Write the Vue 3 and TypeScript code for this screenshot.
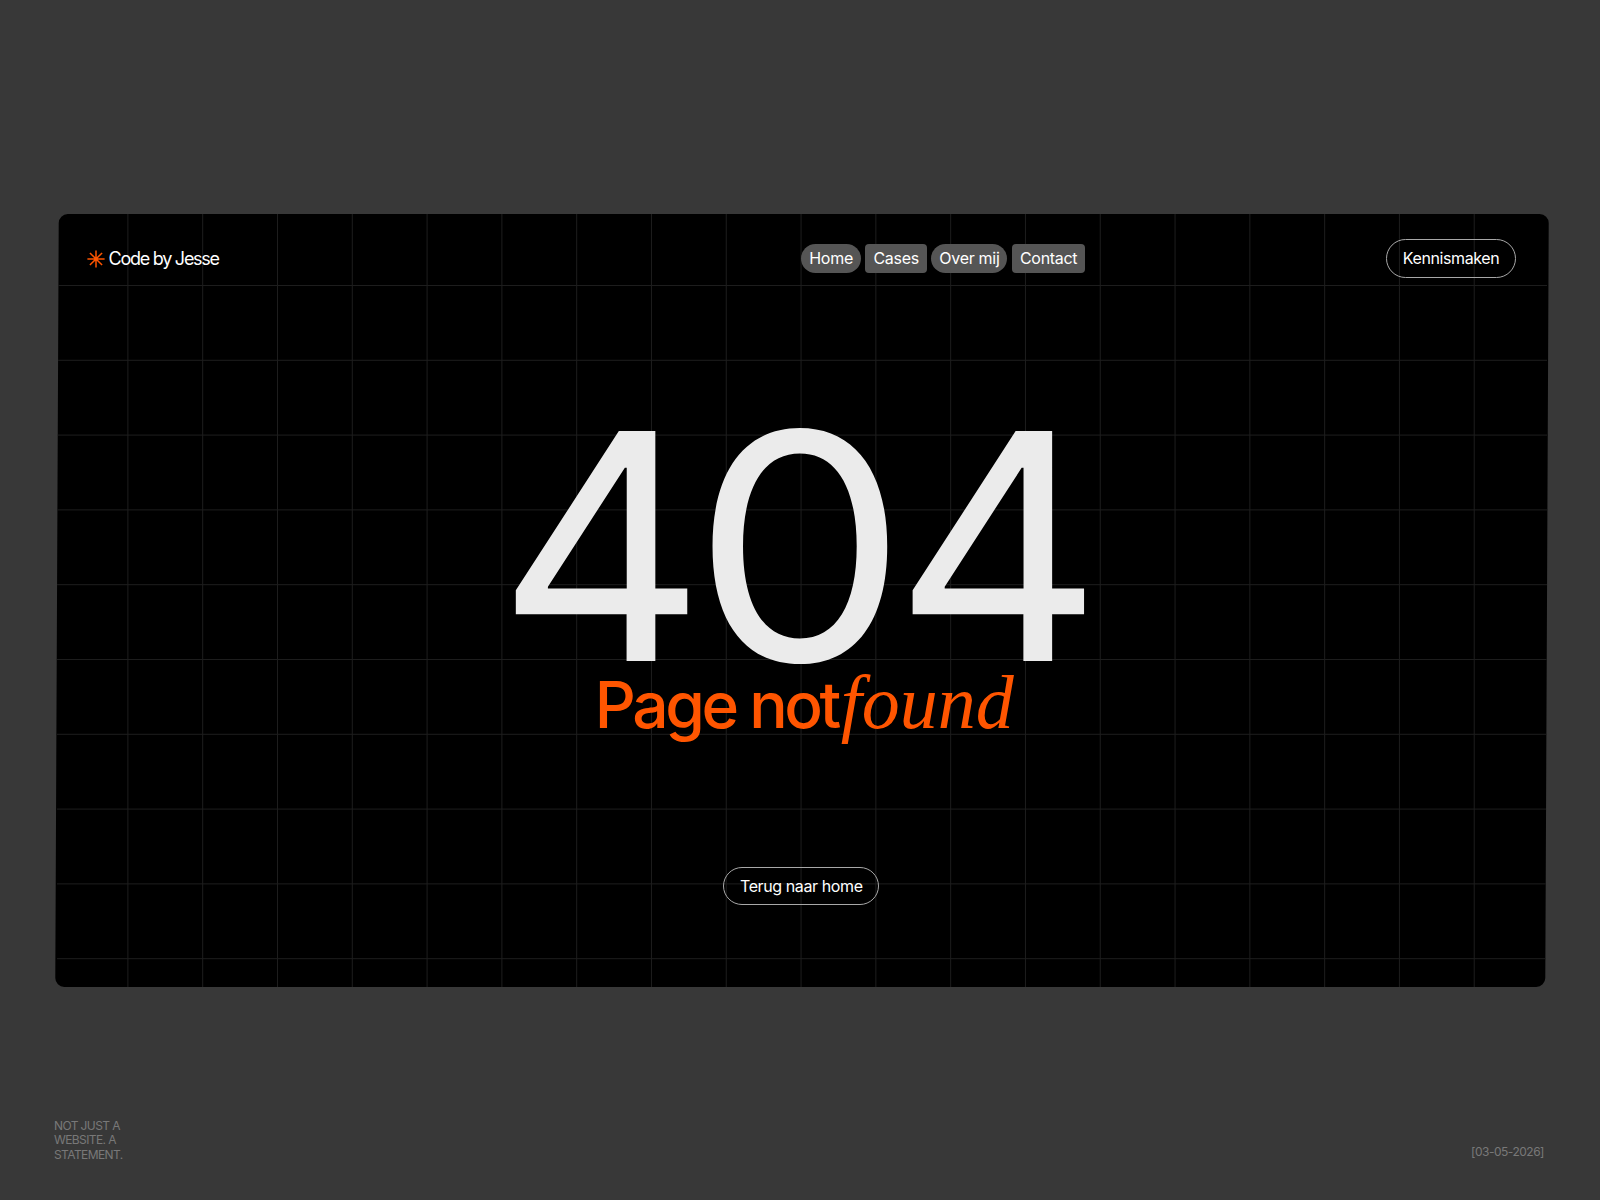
<script setup lang="ts">
interface NavItem { label: string; shape: 'pill' | 'box' }
const items: NavItem[] = [
  { label: 'Home', shape: 'pill' },
  { label: 'Cases', shape: 'box' },
  { label: 'Over mij', shape: 'pill' },
  { label: 'Contact', shape: 'box' },
]
const spokes: number[] = [0, 45, 90, 135]
</script>

<template>
  <div class="page">
    <section class="card">
      <div class="shape" aria-hidden="true"><div class="grid"></div></div>
      <header class="head">
        <a class="logo">
          <svg class="star" width="18" height="18" viewBox="0 0 18 18">
            <line v-for="a in spokes" :key="a" x1="9" y1="0.4" x2="9" y2="17.6" :transform="`rotate(${a} 9 9)`" />
            <circle cx="9" cy="9" r="2" />
          </svg>
          <span>Code by Jesse</span>
        </a>
        <div class="right">
          <nav class="nav">
            <a v-for="i in items" :key="i.label" :class="['nav-item', i.shape]">{{ i.label }}</a>
          </nav>
          <a class="btn btn-top">Kennismaken</a>
        </div>
      </header>
      <main class="main">
        <h1 class="big">4<span class="zero">0</span>4</h1>
        <h2 class="title">Page not <em>found</em></h2>
        <a class="btn btn-home">Terug naar home</a>
      </main>
    </section>
    <footer class="foot">
      <p class="claim">NOT JUST A<br />WEBSITE. A<br />STATEMENT.</p>
      <p class="date">[03-05-2026]</p>
    </footer>
  </div>
</template>

<style scoped>
.page {
  height: 1200px;
  box-sizing: border-box;
  padding-top: 214px;
  background: #383838;
  display: flex;
  flex-direction: column;
  font-family: Inter, "Liberation Sans", Arial, sans-serif;
  color: #fff;
  overflow: hidden;
}
.card {
  position: relative;
  width: 1490px;
  height: 773px;
  margin-left: 56.6px;
}
.shape {
  position: absolute;
  inset: 0;
  background: #000;
  border-radius: 9px;
  overflow: hidden;
  transform: skewX(-0.26deg);
}
.grid {
  position: absolute;
  inset: 0;
  transform: skewX(0.26deg);
  background-image:
    linear-gradient(#1d1d1d 1px, transparent 1px),
    linear-gradient(90deg, #1d1d1d 1px, transparent 1px);
  background-size: 74.8px 74.8px;
  background-position: 70.4px 71px;
}
.head {
  position: relative;
  display: grid;
  grid-template-columns: 1fr 1fr;
  align-items: center;
  padding: 25px 30.5px 0 29.9px;
}
.logo {
  display: flex;
  align-items: center;
  gap: 3px;
  margin-left: 1px;
  font-size: 18px;
  letter-spacing: -1.25px;
}
.star line {
  stroke: #ff5500;
  stroke-width: 1.5;
}
.star circle {
  fill: #ff5500;
}
.right {
  display: flex;
  align-items: center;
  justify-content: space-between;
}
.nav {
  display: flex;
  gap: 4.5px;
}
.nav-item {
  height: 29px;
  line-height: 29px;
  padding: 0 8px;
  background: #555;
  font-size: 16px;
  letter-spacing: -0.3px;
}
.pill {
  border-radius: 15px;
}
.box {
  border-radius: 4px;
}
.btn {
  display: flex;
  align-items: center;
  justify-content: center;
  box-sizing: border-box;
  border: 1px solid #a8a8a8;
  border-radius: 20px;
  font-size: 16px;
  letter-spacing: -0.4px;
}
.btn-top {
  width: 130px;
  height: 39px;
  padding-bottom: 1px;
}
.main {
  position: relative;
  display: flex;
  flex-direction: column;
  align-items: center;
  padding: 148px 0.6px 0 0;
}
.big {
  margin: 0;
  padding-right: 11px;
  font-size: 316px;
  font-weight: 400;
  line-height: 240px;
  letter-spacing: -8px;
  transform: scaleX(1.024);
  color: #ebebeb;
}
.zero {
  display: inline-block;
  transform: scaleX(1.055);
}
.title {
  margin: -3px 0 0;
  padding-left: 6px;
  font-size: 64px;
  font-weight: 500;
  line-height: 78px;
  letter-spacing: -3.4px;
  color: #ff5500;
}
.title em {
  margin-left: -11px;
  font-family: "Liberation Serif", "Times New Roman", serif;
  font-style: italic;
  font-weight: 400;
  font-size: 76px;
  letter-spacing: 0;
}
.btn-home {
  width: 156px;
  height: 38px;
  margin-top: 123px;
}
.foot {
  margin-top: auto;
  display: flex;
  justify-content: space-between;
  align-items: flex-end;
  padding: 0 56px 38px 54px;
  color: #787878;
  font-size: 12px;
  line-height: 14.3px;
  letter-spacing: -0.6px;
}
.foot p {
  margin: 0;
}
.date {
  letter-spacing: -0.5px;
  padding-bottom: 3px;
}
</style>
